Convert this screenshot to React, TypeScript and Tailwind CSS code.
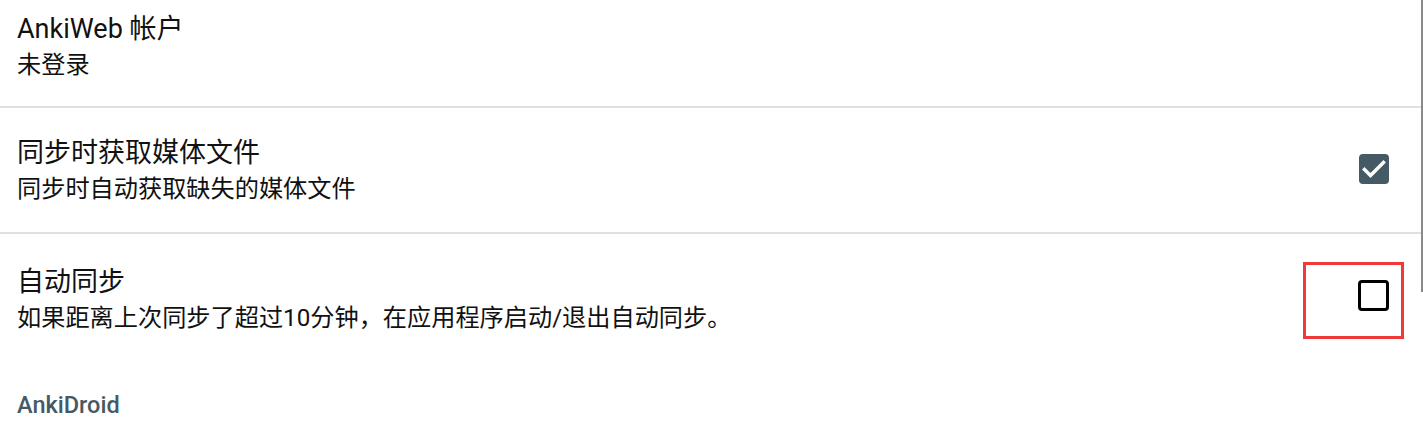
import React from "react";

type Pref = {
  title: string;
  summary: string;
  checkbox?: "on" | "off";
  highlight?: boolean;
  rowClass: string;
  textClass: string;
};

const prefs: Pref[] = [
  {
    title: "AnkiWeb 帐户",
    summary: "未登录",
    rowClass: "h-[106px] items-start pt-[11px]",
    textClass: "",
  },
  {
    title: "同步时获取媒体文件",
    summary: "同步时自动获取缺失的媒体文件",
    checkbox: "on",
    rowClass: "h-[124px] items-center",
    textClass: "mt-[3px]",
  },
  {
    title: "自动同步",
    summary: "如果距离上次同步了超过10分钟，在应用程序启动/退出自动同步。",
    checkbox: "off",
    highlight: true,
    rowClass: "h-[124px] items-center",
    textClass: "mt-[9px]",
  },
];

function CheckBox({ checked }: { checked: boolean }) {
  if (checked) {
    return (
      <div className="w-[30px] h-[30px] rounded-[4px] bg-[#455a64]">
        <svg width="30" height="30" viewBox="0 0 30 30" fill="none">
          <path
            d="M5.5 15.5l6 6L24.5 8.5"
            stroke="white"
            strokeWidth="3.4"
            strokeLinecap="square"
          />
        </svg>
      </div>
    );
  }
  return (
    <div className="w-[31px] h-[31px] rounded-[4px] border-[3px] border-black bg-white" />
  );
}

function PrefRow({ pref }: { pref: Pref }) {
  return (
    <div className={`relative flex pl-[17px] pr-[33px] ${pref.rowClass}`}>
      <div className={`flex-1 flex flex-col ${pref.textClass}`}>
        <div className="text-[27px] leading-[36px] text-[#111]">{pref.title}</div>
        <div className="text-[24.2px] leading-[37px] text-[#111]">{pref.summary}</div>
      </div>
      {pref.checkbox && (
        <div className="-mt-[2px]">
          <CheckBox checked={pref.checkbox === "on"} />
        </div>
      )}
      {pref.highlight && (
        <div className="absolute left-[1303px] top-[28px] w-[101px] h-[77px] border-[3px] border-[#f03a3a]" />
      )}
    </div>
  );
}

export default function App() {
  return (
    <div
      className="relative w-[1423px] h-[440px] bg-white overflow-hidden"
      style={{ fontFamily: 'Roboto, "Noto Sans CJK SC", sans-serif' }}
    >
      <div className="pr-[1px]">
        {prefs.map((p, i) => (
          <React.Fragment key={i}>
            <PrefRow pref={p} />
            {i < prefs.length - 1 && <div className="h-[2px] bg-[#e0e0e0]" />}
          </React.Fragment>
        ))}
        <div className="pl-[17px] pt-[29px] text-[23.5px] leading-[36px] font-medium text-[#455a64]">
          AnkiDroid
        </div>
      </div>
      <div className="absolute right-0 top-0 w-[2px] h-[292px] bg-[#8a8a8a]" />
    </div>
  );
}
